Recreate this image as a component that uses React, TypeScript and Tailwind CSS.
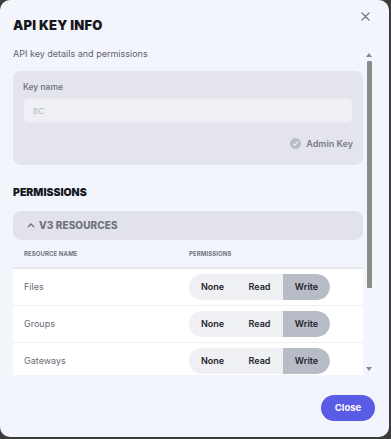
import React from "react";

const rows = ["Files", "Groups", "Gateways"];

function Segmented() {
  return (
    <div className="flex h-[26px] w-[141px] rounded-full overflow-hidden text-[9px] font-semibold text-[#24262c]">
      <div className="flex-1 flex items-center justify-center bg-[#eff0f3]">None</div>
      <div className="flex-1 flex items-center justify-center bg-[#eff0f3]">Read</div>
      <div className="flex-1 flex items-center justify-center bg-[#b7bcc7] rounded-r-full">Write</div>
    </div>
  );
}

export default function App() {
  return (
    <div className="w-[391px] h-[439px] bg-[#3b3b3b]" style={{ fontFamily: "Inter, 'Liberation Sans', sans-serif" }}>
      <div className="w-[389px] h-[437px] bg-[#f3f5fc] rounded-[10px] flex flex-col">
        <div className="flex items-start justify-between pl-[13px] pr-[19px] pt-[17px]">
          <div className="text-[13px] font-black tracking-[0.2px] text-[#17181c] leading-[16px]">API KEY INFO</div>
          <svg width="9" height="9" viewBox="0 0 10 10" className="-mt-[5px]" stroke="#6b6e78" strokeWidth="1.4" strokeLinecap="round">
            <path d="M1 1 L9 9 M9 1 L1 9" />
          </svg>
        </div>
        <div className="flex mt-[15px] h-[327px]">
          <div className="w-[363px] pl-[13px] overflow-hidden">
            <div className="text-[9px] text-[#5f626c] leading-[12px]">API key details and permissions</div>
            <div className="mt-[11px] w-[350px] bg-[#e3e4ec] rounded-[8px] pt-[10px] pb-[14px] px-[10px]">
              <div className="text-[8.5px] font-medium text-[#6d707a] leading-[12px]">Key name</div>
              <div className="mt-[5px] h-[25px] bg-[#eef0f5] rounded-[5px] border border-[#e7e9ef] flex items-center px-[9px] text-[8px] text-[#b6b8bf]">BC</div>
              <div className="flex justify-end items-center mt-[14px] gap-[5px]">
                <div className="w-[11px] h-[11px] rounded-full bg-[#b9bcc5] flex items-center justify-center">
                  <svg width="7" height="7" viewBox="0 0 8 8" fill="none" stroke="#e8e9ee" strokeWidth="1.4">
                    <path d="M1.2 4.2 L3.2 6 L6.8 2" />
                  </svg>
                </div>
                <div className="text-[9px] font-semibold text-[#7a7d86]">Admin Key</div>
              </div>
            </div>
            <div className="mt-[21px] text-[10.5px] font-black text-[#17181c] leading-[14px]">PERMISSIONS</div>
            <div className="mt-[11px] w-[350px] h-[29px] bg-[#e2e3ea] rounded-[8px] flex items-center pl-[14px] gap-[4px]">
              <svg width="8" height="6" viewBox="0 0 8 6" fill="none" stroke="#6f727c" strokeWidth="1.3">
                <path d="M1 5 L4 2 L7 5" />
              </svg>
              <span className="text-[10px] font-extrabold text-[#6f727c] tracking-[0.1px]">V3 RESOURCES</span>
            </div>
            <div className="w-[350px] flex items-center h-[29px] border-b-2 border-[#e6e8ee] text-[6px] font-bold text-[#6f727c] tracking-[0.1px]">
              <div className="pl-[11px] w-[176px]">RESOURCE NAME</div>
              <div>PERMISSIONS</div>
            </div>
            <div className="w-[350px] bg-white">
              {rows.map((r, i) => (
                <div key={r} className={"flex items-center h-[37px] " + (i < rows.length - 1 ? "border-b border-[#eef0f4]" : "")}>
                  <div className="pl-[11px] w-[176px] text-[9px] text-[#6a6d76]">{r}</div>
                  <Segmented />
                </div>
              ))}
            </div>
          </div>
          <div className="w-[12px] flex flex-col items-center mt-[4px] pb-[4px]">
            <svg width="6" height="4" viewBox="0 0 6 4" className="mt-[1px]"><path d="M0 4 L3 0 L6 4 Z" fill="#8a8a8a" /></svg>
            <div className="w-[5px] h-[227px] bg-[#8c8c8c] rounded-[1px] mt-[4px]" />
            <div className="flex-1" />
            <svg width="6" height="4" viewBox="0 0 6 4"><path d="M0 0 L6 0 L3 4 Z" fill="#8a8a8a" /></svg>
          </div>
        </div>
        <div className="flex justify-end pr-[14px] mt-[20px]">
          <div className="h-[26px] w-[54px] rounded-full bg-[#5a5ce6] text-white text-[9.5px] font-bold flex items-center justify-center">Close</div>
        </div>
      </div>
    </div>
  );
}
